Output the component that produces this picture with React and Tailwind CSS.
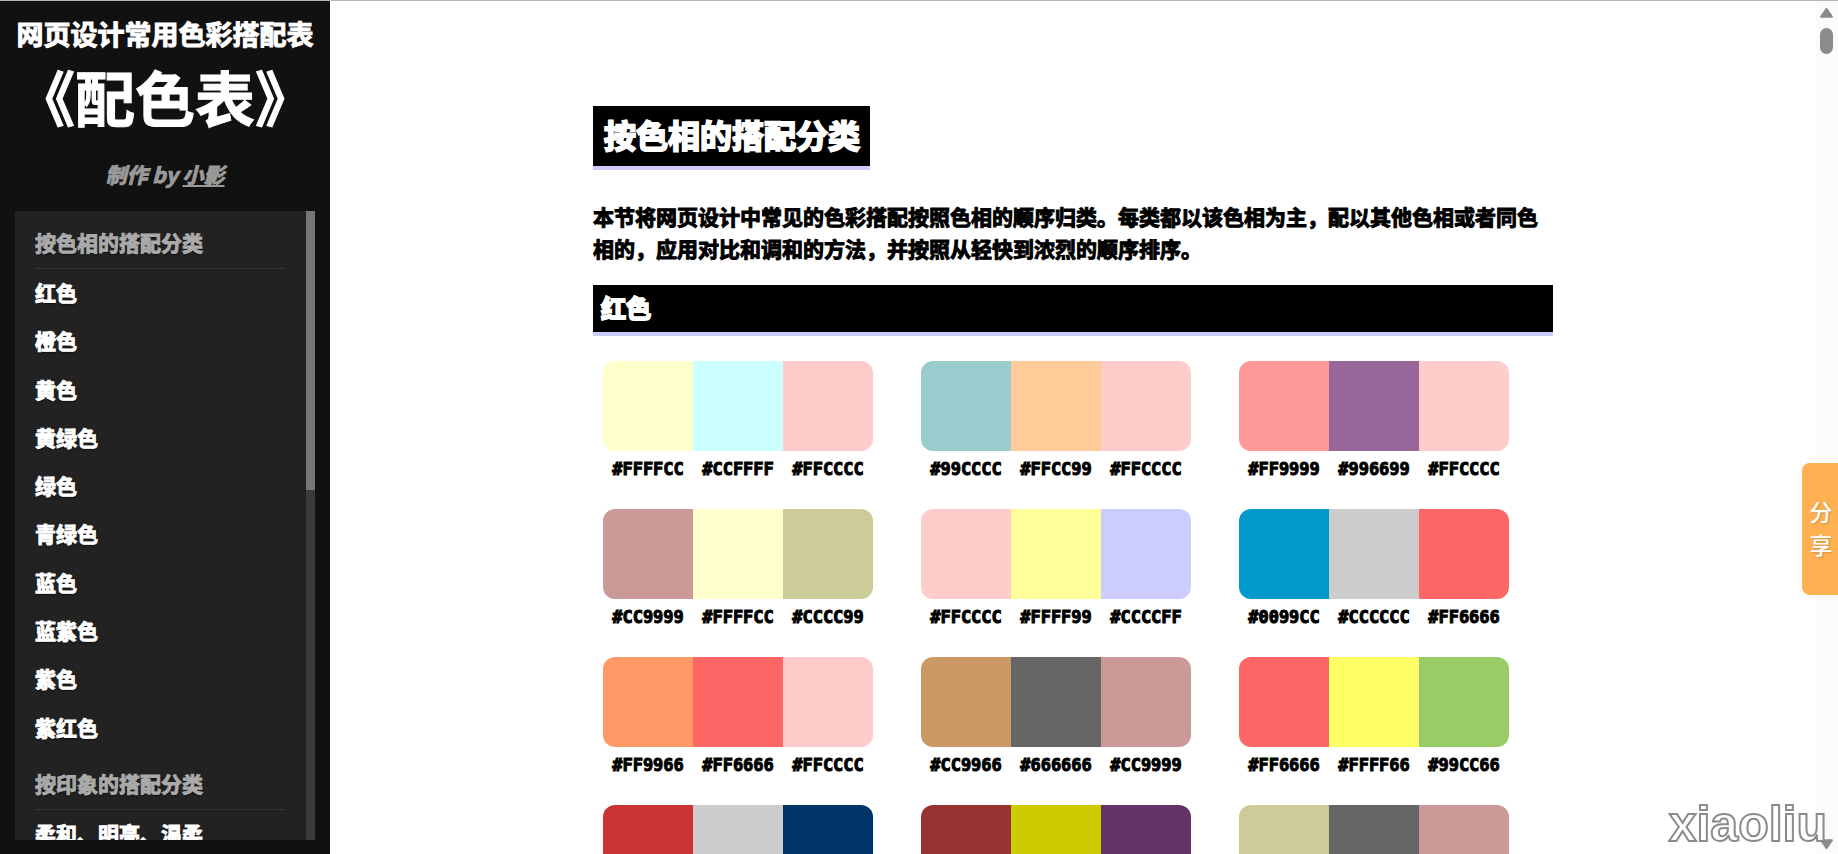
const hues = ['红色', '橙色', '黄色', '黄绿色', '绿色', '青绿色', '蓝色', '蓝紫色', '紫色', '紫红色'];
const moods = ['柔和、明亮、温柔'];

const palettes = [
  ['#FFFFCC', '#CCFFFF', '#FFCCCC'],
  ['#99CCCC', '#FFCC99', '#FFCCCC'],
  ['#FF9999', '#996699', '#FFCCCC'],
  ['#CC9999', '#FFFFCC', '#CCCC99'],
  ['#FFCCCC', '#FFFF99', '#CCCCFF'],
  ['#0099CC', '#CCCCCC', '#FF6666'],
  ['#FF9966', '#FF6666', '#FFCCCC'],
  ['#CC9966', '#666666', '#CC9999'],
  ['#FF6666', '#FFFF66', '#99CC66'],
  ['#CC3333', '#CCCCCC', '#003366'],
  ['#993333', '#CCCC00', '#663366'],
  ['#CCCC99', '#666666', '#CC9999'],
];

function NavGroup({ title, items, listClass }) {
  return (
    <section>
      <h3 className="border-b border-[#333] pt-[15px] pb-[10px] leading-8 text-[#aaa]">{title}</h3>
      <ul className={listClass}>
        {items.map((item) => (
          <li key={item} className="flex-1">
            <a href="#red" className="block pb-[2px] leading-[46px] text-white">{item}</a>
          </li>
        ))}
      </ul>
    </section>
  );
}

function Sidebar() {
  return (
    <aside className="flex w-[330px] shrink-0 flex-col bg-[#111] px-[15px] pt-[15px] pb-[14px] text-center text-white">
      <h1 className="font-bold">
        <span className="block text-[27px] leading-9 whitespace-nowrap [-webkit-text-stroke:1px]">网页设计常用色彩搭配表</span>
        <span className="block text-[60px] leading-[88px] whitespace-nowrap [-webkit-text-stroke:1px]">《配色表》</span>
      </h1>
      <p className="pt-[18px] pb-[21px] text-[21px] leading-8 font-bold text-[#999] italic [-webkit-text-stroke:1px]">
        制作 by <a href="#author" className="underline underline-offset-2">小影</a>
      </p>
      <div className="flex min-h-0 flex-1 overflow-hidden bg-[#222]">
        <nav className="flex-1 overflow-hidden pr-[21px] pl-5 text-left text-[21px] font-bold [-webkit-text-stroke:1px] [text-shadow:0_1px_2px_#000]">
          <NavGroup title="按色相的搭配分类" items={hues} listClass="flex min-h-[483px] flex-col" />
          <NavGroup title="按印象的搭配分类" items={moods} listClass="flex flex-col" />
        </nav>
        <div className="w-[9px] bg-[#3a3a3a]" aria-hidden="true">
          <div className="h-[279px] bg-[#777]" />
        </div>
      </div>
    </aside>
  );
}

function Palette({ colors }) {
  return (
    <li className="w-[270px]">
      <div className="flex h-[90px] overflow-hidden rounded-xl">
        {colors.map((c) => (
          <div key={c} className="flex-1" style={{ backgroundColor: c }} />
        ))}
      </div>
      <div className="flex pt-1 font-['DejaVu_Sans_Mono',monospace] text-[17px] leading-7 font-bold [-webkit-text-stroke:1px]">
        {colors.map((c) => (
          <span key={c} className="flex-1 text-center">{c}</span>
        ))}
      </div>
    </li>
  );
}

function PageScrollbar() {
  return (
    <div className="flex w-[22px] shrink-0 flex-col items-center bg-[#fbfbfb] pt-[7px] pr-[1px] pb-[5px] text-[#8b8b8b]" aria-hidden="true">
      <svg width="13" height="10" viewBox="0 0 14 10" preserveAspectRatio="none" fill="currentColor">
        <path d="M5.8.7a1.5 1.5 0 0 1 2.4 0l5.4 7.4a1 1 0 0 1-.8 1.7H1.2a1 1 0 0 1-.8-1.7Z" />
      </svg>
      <div className="mt-[10px] h-[26px] w-[13px] rounded-full bg-[#8b8b8b]" />
      <svg className="mt-auto" width="13" height="10" viewBox="0 0 14 10" preserveAspectRatio="none" fill="currentColor">
        <path d="M5.8 9.3a1.5 1.5 0 0 0 2.4 0l5.4-7.4a1 1 0 0 0-.8-1.7H1.2a1 1 0 0 0-.8 1.7Z" />
      </svg>
    </div>
  );
}

export default function App() {
  return (
    <div className="relative flex h-screen overflow-hidden border-t border-[#b5b5b5] bg-white font-['Noto_Sans_CJK_SC',sans-serif] text-black">
      <Sidebar />
      <main className="min-w-0 flex-1 overflow-hidden pt-[105px]">
        <div className="mx-auto max-w-[960px]">
          <h2 className="w-fit border-b-4 border-[#ccccff] bg-black pr-[10px] pb-1 pl-[11px] text-[32px] leading-[56px] font-bold text-white [-webkit-text-stroke:2px]">
            按色相的搭配分类
          </h2>
          <p className="pt-[30px] text-[21px] leading-8 font-bold [-webkit-text-stroke:1px]">
            本节将网页设计中常见的色彩搭配按照色相的顺序归类。每类都以该色相为主，配以其他色相或者同色相的，应用对比和调和的方法，并按照从轻快到浓烈的顺序排序。
          </p>
          <h3 id="red" className="mt-[21px] border-b-4 border-[#ccccff] bg-black px-2 pb-[2px] text-[25px] leading-[45px] font-bold text-white [-webkit-text-stroke:2px]">
            红色
          </h3>
          <ul className="flex flex-wrap gap-x-12 gap-y-[26px] px-[10px] pt-[25px]">
            {palettes.map((colors) => (
              <Palette key={colors.join()} colors={colors} />
            ))}
          </ul>
        </div>
      </main>
      <button
        type="button"
        className="absolute top-[462px] right-0 flex h-[132px] w-9 flex-col items-center justify-center rounded-l-lg bg-[#ffb151] pb-[2px] pl-[2px] text-[23px] leading-[33px] font-medium text-white [text-shadow:1px_1px_2px_#0003]"
      >
        <span>分</span>
        <span>享</span>
      </button>
      <span className="absolute right-[11px] bottom-[5px] font-['Liberation_Sans',sans-serif] text-[50px] leading-none font-bold text-white [-webkit-text-stroke:2px_#8b8b8b]">
        xiaoliu
      </span>
      <PageScrollbar />
    </div>
  );
}
